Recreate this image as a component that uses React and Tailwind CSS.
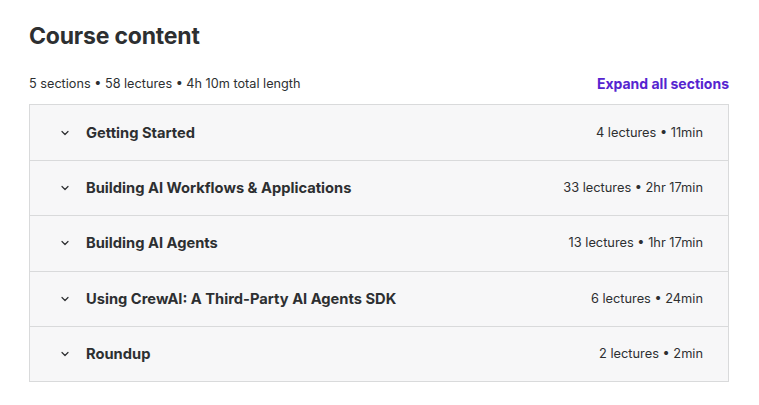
const SECTIONS = [
  { title: 'Getting Started', meta: '4 lectures • 11min' },
  { title: 'Building AI Workflows & Applications', meta: '33 lectures • 2hr 17min' },
  { title: 'Building AI Agents', meta: '13 lectures • 1hr 17min' },
  { title: 'Using CrewAI: A Third-Party AI Agents SDK', meta: '6 lectures • 24min' },
  { title: 'Roundup', meta: '2 lectures • 2min' },
]

export default function App() {
  return (
    <div className="min-h-screen bg-white text-[#2d2f31]" style={{ fontFamily: 'Inter, "Noto Sans", sans-serif' }}>
      <div className="w-[700px] ml-[29px] pt-[20px]">
        <h2 className="text-[23px] font-bold leading-[32px] tracking-[-0.2px]">Course content</h2>

        <div className="mt-[22px] mb-[10px] flex items-center justify-between">
          <span className="text-[12.7px] leading-[20px]">5 sections • 58 lectures • 4h 10m total length</span>
          <button className="text-[14px] font-bold leading-[20px] text-[#5624d0]">Expand all sections</button>
        </div>

        {/* Sections */}
        <div className="border border-[#d9dadb]">
          {SECTIONS.map((s, i) => (
            <div
              key={s.title}
              className={`flex items-center h-[55.2px] bg-[#f7f7f8] pl-[29px] pr-[25px] ${i > 0 ? 'border-t border-[#d9dadb]' : ''}`}
            >
              <svg className="w-[12px] h-[12px] text-[#2d2f31]" fill="none" stroke="currentColor" strokeWidth="2.4" viewBox="0 0 24 24">
                <path strokeLinecap="round" strokeLinejoin="round" d="M6 9l6 6 6-6" />
              </svg>
              <span className="ml-[15px] text-[14.7px] font-bold leading-[20px]">{s.title}</span>
              <span className="ml-auto text-[12.8px] leading-[20px]">{s.meta}</span>
            </div>
          ))}
        </div>
      </div>
    </div>
  )
}
